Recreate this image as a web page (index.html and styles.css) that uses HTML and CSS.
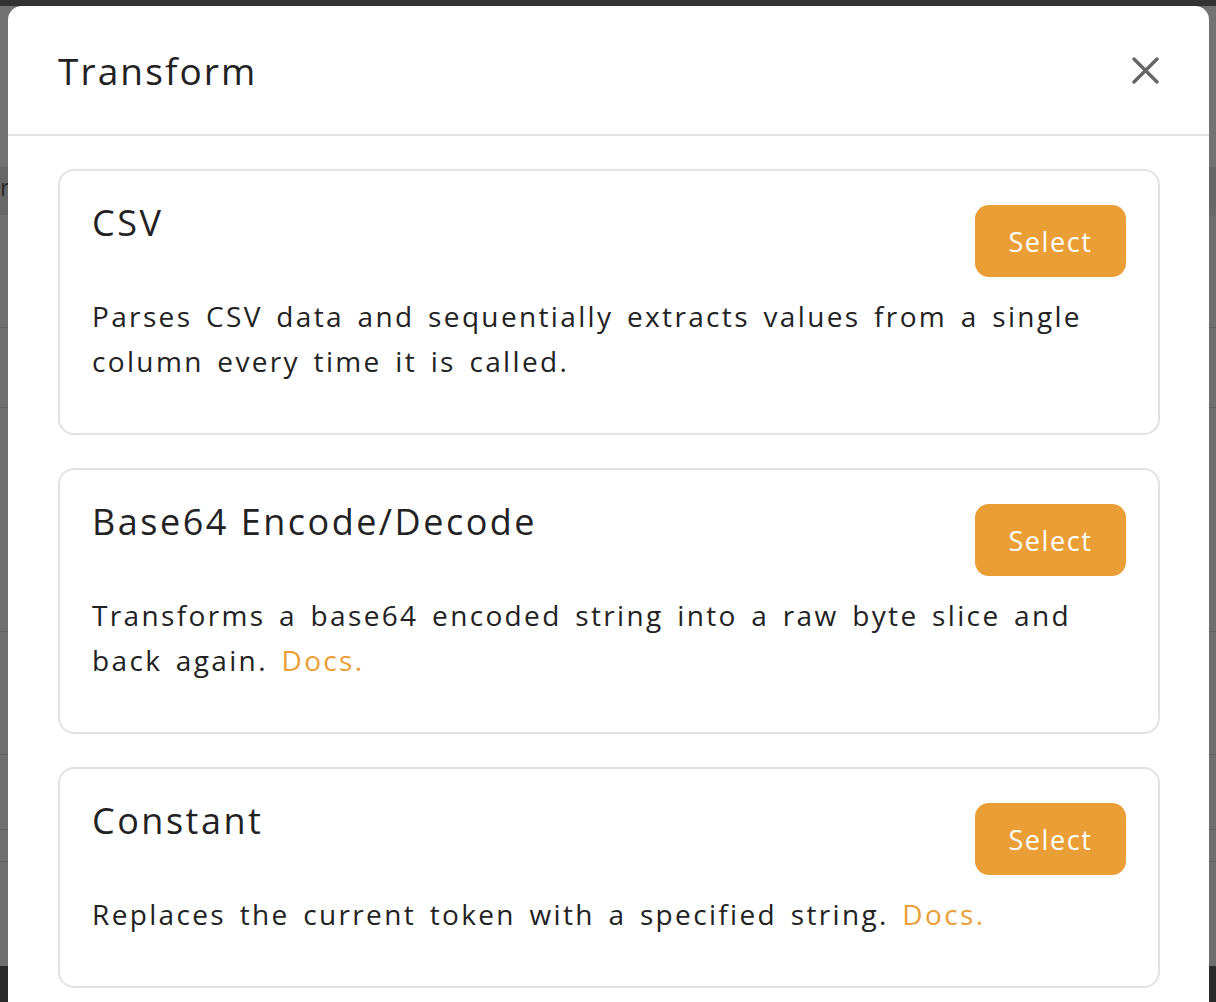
FILE: index.html
```html
<!DOCTYPE html>
<html lang="en">
<head>
<meta charset="utf-8">
<title>Transform</title>
<link rel="stylesheet" href="styles.css">
</head>
<body>
<div class="page">
  <div class="topbar"></div>
  <div class="row row-a"></div>
  <div class="row row-head"><span class="row-text">r</span></div>
  <div class="row row-b"></div>
  <div class="row row-c"></div>
  <div class="row row-d"></div>
  <div class="row row-e"></div>
  <div class="row row-f"></div>
  <div class="row row-g"></div>
  <div class="row row-h"></div>
  <div class="footer"></div>
</div>

<div class="modal">
  <div class="modal-header">
    <h1 class="modal-title">Transform</h1>
    <button class="close" aria-label="Close">
      <svg width="27" height="27" viewBox="0 0 27 27"><path d="M2 2L25 25M25 2L2 25" stroke="#666666" stroke-width="3.4" stroke-linecap="round"/></svg>
    </button>
  </div>
  <div class="modal-body">
    <div class="card">
      <div class="card-top">
        <h2 class="card-title">CSV</h2>
        <button class="select">Select</button>
      </div>
      <p class="card-desc">Parses CSV data and sequentially extracts values from a single column every time it is called.</p>
    </div>
    <div class="card">
      <div class="card-top">
        <h2 class="card-title">Base64 Encode/Decode</h2>
        <button class="select">Select</button>
      </div>
      <p class="card-desc"><span>Transforms a base64 encoded string into a raw byte slice and back again.</span> <a class="docs" href="#">Docs.</a></p>
    </div>
    <div class="card">
      <div class="card-top">
        <h2 class="card-title">Constant</h2>
        <button class="select">Select</button>
      </div>
      <p class="card-desc"><span>Replaces the current token with a specified string.</span> <a class="docs" href="#">Docs.</a></p>
    </div>
  </div>
</div>
</body>
</html>
```

FILE: styles.css
```css
html, body {
  margin: 0;
  padding: 0;
  height: 100%;
  overflow: hidden;
}
body {
  background: #6d6d6d;
  font-family: "Open Sans", "Liberation Sans", sans-serif;
  color: #222222;
}
.page {
  display: flex;
  flex-direction: column;
  height: 1002px;
}
.topbar { height: 6px; background: #333333; flex: none; }
.row { flex: none; border-bottom: 1px solid #5e5e5e; background: #6e6e6e; }
.row-a { height: 161px; background: #727272; border-bottom: none; }
.row-head { height: 48px; background: #676767; border-bottom: none; }
.row-text { display: block; color: #2a2a2a; font-size: 24px; line-height: 40px; }
.row-b { height: 112px; }
.row-c { height: 79px; }
.row-d { height: 223px; }
.row-e { height: 122px; }
.row-f { height: 74px; }
.row-g { height: 31px; }
.row-h { height: 104px; border-bottom: none; }
.footer { flex: 1; background: #2b2b2b; }

.modal {
  position: absolute;
  left: 8px;
  top: 6px;
  width: 1201px;
  height: 1100px;
  background: #ffffff;
  border-radius: 14px;
}
.modal-header {
  height: 128px;
  border-bottom: 2px solid #e2e2e2;
  display: flex;
  align-items: center;
  justify-content: space-between;
  padding: 0 50px;
}
.modal-title {
  margin: 0;
  font-size: 37px;
  font-weight: 500;
  color: #222222;
  letter-spacing: 2.1px;
}
.close {
  background: none;
  border: none;
  padding: 0;
  width: 27px;
  height: 27px;
  display: flex;
  cursor: pointer;
}
.modal-body {
  padding: 33px 49px 0 50px;
  display: flex;
  flex-direction: column;
  gap: 33px;
}
.card {
  border: 2px solid #e2e2e2;
  border-radius: 16px;
  padding: 34px 32px 49px 32px;
}
.card-top {
  display: flex;
  justify-content: space-between;
  align-items: flex-start;
}
.card-title {
  margin: 0;
  font-size: 36px;
  line-height: 36px;
  font-weight: 500;
  color: #222222;
  letter-spacing: 2.5px;
}
.select {
  width: 151px;
  height: 72px;
  border: none;
  border-radius: 14px;
  background: #ea9e36;
  color: #ffffff;
  font-family: "Open Sans", "Liberation Sans", sans-serif;
  font-size: 27px;
  font-weight: 500;
  letter-spacing: 1.6px;
  cursor: pointer;
  flex: none;
}
.card-desc {
  margin: 17px 0 0 0;
  font-size: 28px;
  line-height: 45px;
  color: #222222;
  letter-spacing: 2.35px;
  word-spacing: 4px;
}
.docs {
  color: #ea9e36;
  text-decoration: none;
}
```
